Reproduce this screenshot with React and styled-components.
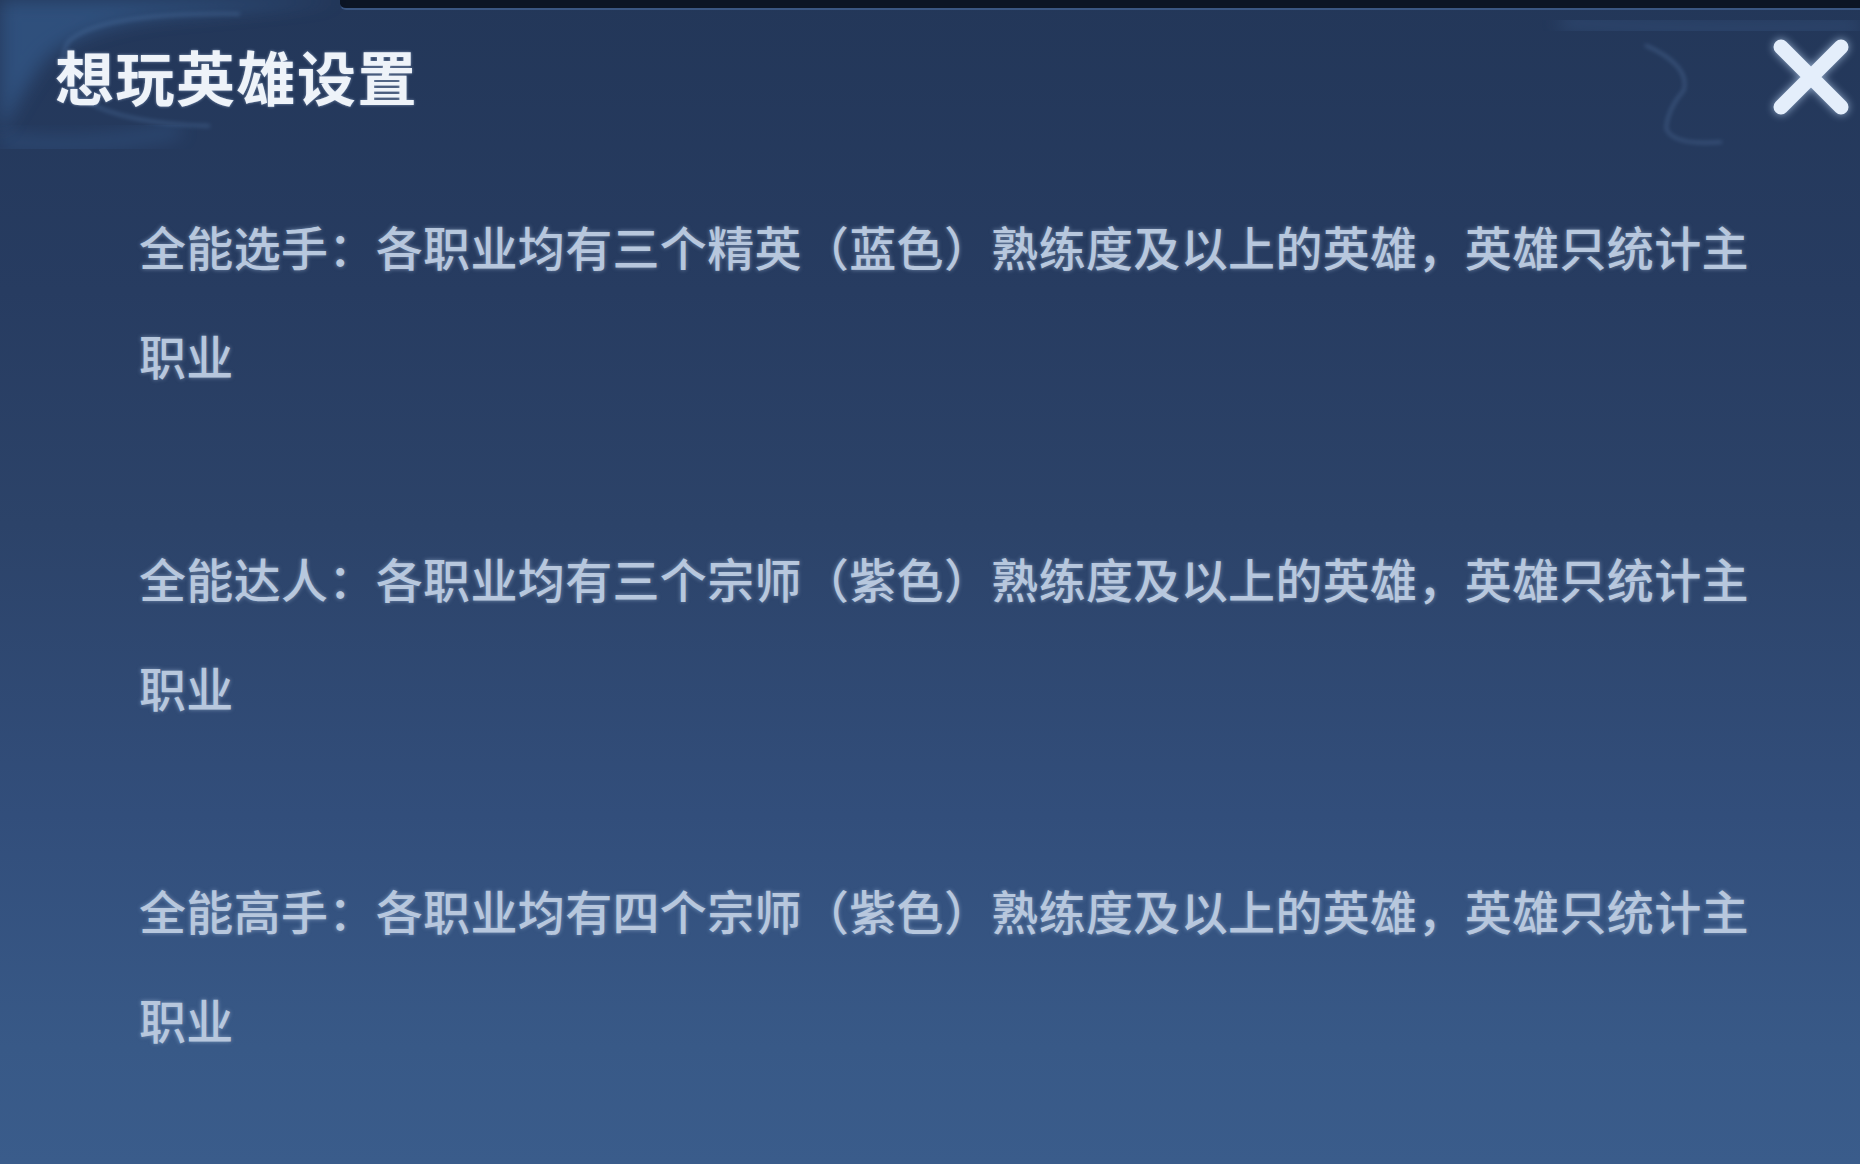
import React from 'react';
import styled, { createGlobalStyle } from 'styled-components';

const GlobalStyle = createGlobalStyle`
  html, body {
    margin: 0;
    padding: 0;
    background: #223659;
  }
  body {
    font-family: 'Noto Sans CJK SC', 'Noto Sans', sans-serif;
  }
`;

const Panel = styled.div`
  position: relative;
  width: 1860px;
  height: 1164px;
  overflow: hidden;
  display: flex;
  flex-direction: column;
  background: linear-gradient(
    180deg,
    #233759 0%,
    #273c61 25%,
    #2c4369 45%,
    #324e7b 70%,
    #385987 90%,
    #3a5c8b 100%
  );
`;

const TopEdge = styled.div`
  height: 8px;
  margin-left: 340px;
  background: #0c1524;
  border-bottom: 2px solid #3a5681;
  border-bottom-left-radius: 6px;
`;

const Header = styled.header`
  position: relative;
  height: 134px;
  display: flex;
  align-items: center;
  justify-content: space-between;
  padding: 0 7px 0 55px;
`;

const Title = styled.h1`
  margin: 0 0 4px;
  font-size: 59px;
  line-height: 1;
  font-weight: 700;
  color: #eef3f9;
  letter-spacing: 1.5px;
  text-shadow: 0 0 3px rgba(210, 228, 255, 0.55);
`;

const CloseButton = styled.button`
  width: 84px;
  height: 84px;
  padding: 0;
  border: none;
  background: none;
  cursor: pointer;
  filter: drop-shadow(0 0 4px rgba(200, 225, 255, 0.7));
`;

const RuleList = styled.div`
  display: flex;
  flex-direction: column;
  gap: 114px;
  padding: 47px 0 0 139px;
  max-width: 1625px;
`;

const Rule = styled.p`
  margin: 0;
  font-size: 47px;
  line-height: 109px;
  font-weight: 500;
  letter-spacing: 0.35px;
  color: #b7c7dd;
  text-shadow: 0 0 4px rgba(190, 212, 240, 0.5);
`;

const Swirl = styled.svg`
  position: absolute;
  top: 0;
  left: 0;
  pointer-events: none;
`;

const rules = [
  '全能选手：各职业均有三个精英（蓝色）熟练度及以上的英雄，英雄只统计主职业',
  '全能达人：各职业均有三个宗师（紫色）熟练度及以上的英雄，英雄只统计主职业',
  '全能高手：各职业均有四个宗师（紫色）熟练度及以上的英雄，英雄只统计主职业',
];

// cloud wisps in the top corners of the frame
function CornerWisps() {
  return (
    <Swirl width="1860" height="200" viewBox="0 0 1860 200">
      <defs>
        <filter id="soft" x="-30%" y="-30%" width="160%" height="160%">
          <feGaussianBlur stdDeviation="9" />
        </filter>
        <filter id="thin" x="-20%" y="-20%" width="140%" height="140%">
          <feGaussianBlur stdDeviation="2" />
        </filter>
      </defs>
      <path
        d="M0 0 H340 Q250 10 170 16 Q80 26 45 60 Q20 95 0 135 Z"
        fill="#3b679f"
        opacity="0.5"
        filter="url(#soft)"
      />
      <path
        d="M240 14 Q100 12 68 42 Q52 72 84 100 Q124 124 210 126"
        stroke="#6a96cc"
        strokeWidth="3"
        fill="none"
        opacity="0.3"
        filter="url(#thin)"
      />
      <path
        d="M0 140 Q80 152 180 130"
        stroke="#3f6ea8"
        strokeWidth="12"
        fill="none"
        opacity="0.35"
        filter="url(#soft)"
      />
      <path
        d="M1645 45 Q1690 65 1684 90 Q1668 108 1666 128 Q1672 146 1722 142"
        stroke="#6c92c4"
        strokeWidth="2"
        fill="none"
        opacity="0.45"
        filter="url(#thin)"
      />
      <path
        d="M1560 22 Q1700 32 1860 26"
        stroke="#3d5f8e"
        strokeWidth="16"
        fill="none"
        opacity="0.4"
        filter="url(#soft)"
      />
    </Swirl>
  );
}

function CloseIcon() {
  return (
    <svg width="84" height="84" viewBox="0 0 84 84">
      <path
        d="M12 12 L72 72 M72 12 L12 72"
        stroke="#e4eefb"
        strokeWidth="15"
        strokeLinecap="round"
      />
    </svg>
  );
}

export default function App() {
  return (
    <>
      <GlobalStyle />
      <Panel>
        <CornerWisps />
        <TopEdge />
        <Header>
          <Title>想玩英雄设置</Title>
          <CloseButton aria-label="关闭">
            <CloseIcon />
          </CloseButton>
        </Header>
        <RuleList>
          {rules.map((text) => (
            <Rule key={text}>{text}</Rule>
          ))}
        </RuleList>
      </Panel>
    </>
  );
}
